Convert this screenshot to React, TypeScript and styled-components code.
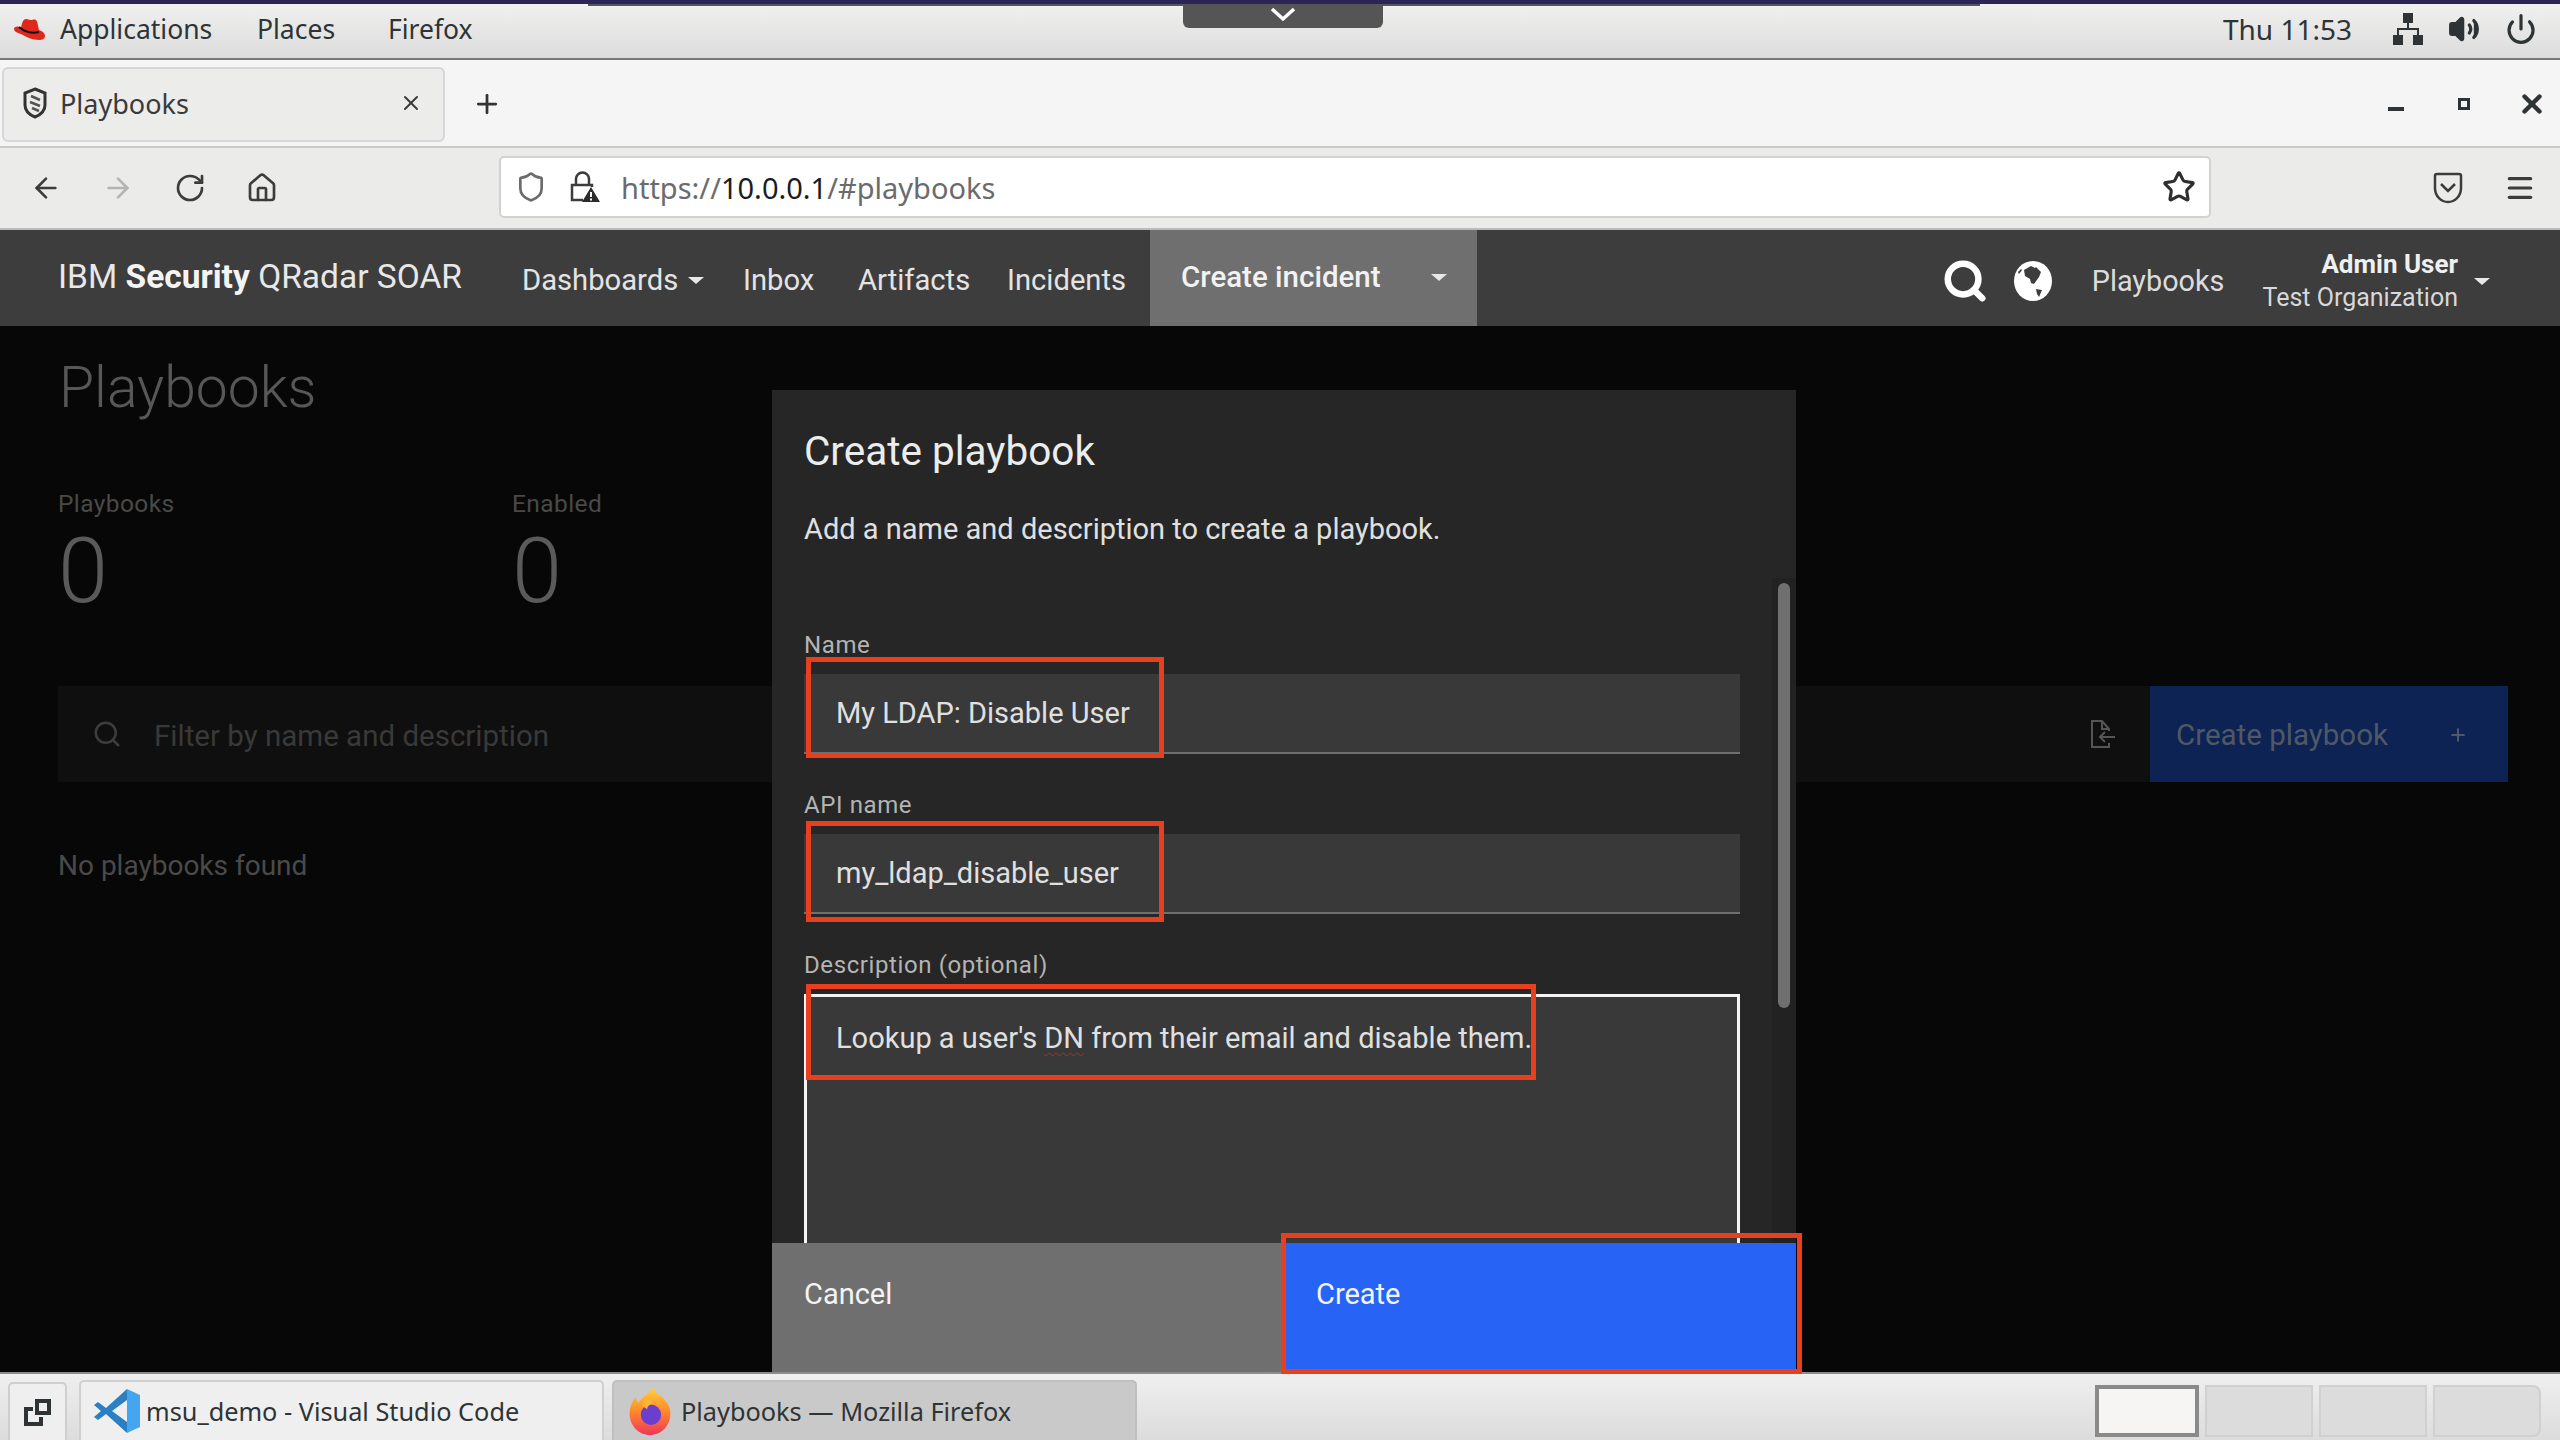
import React from 'react';
import styled, {createGlobalStyle} from 'styled-components';
import {ArrowLeft, ArrowRight, Home, Menu, Plus, Power, RotateCw, Search, Shield, Star, Volume2, X} from 'lucide-react';

const plex = `Roboto, "Noto Sans", sans-serif`;
const gnome = `"Noto Sans", "Open Sans", sans-serif`;

const GlobalStyle = createGlobalStyle`
    html, body {
        margin: 0;
        padding: 0;
        background: #070707;
    }
    * {
        box-sizing: border-box;
    }
`;

const Page = styled.div`
    width: 2560px;
    height: 1440px;
    display: flex;
    flex-direction: column;
    overflow: hidden;
    position: relative;
`;

/* gnome top bar */
const TopBar = styled.div`
    height: 60px;
    flex: none;
    border-top: 4px solid #2b2556;
    border-bottom: 2px solid #77787a;
    background: linear-gradient(#f0f0ef, #dcdcdc);
    display: flex;
    align-items: center;
    padding: 0 23px 4px 14px;
    font: 400 26.5px ${gnome};
    color: #2e3436;
    position: relative;
`;

const MenuLabel = styled.span<{ $w: number }>`
    width: ${p => p.$w}px;
    white-space: nowrap;
`;

const Clock = styled.span`
    margin-left: auto;
    margin-right: 41px;
    font-size: 28px;
    white-space: nowrap;
`;

const TrayIcons = styled.div`
    display: flex;
    align-items: center;
    gap: 25px;
`;

const RemoteBar = styled.div`
    position: absolute;
    top: 0;
    left: 588px;
    width: 1392px;
    height: 2px;
    background: #55555f;
`;

const RemoteTab = styled.div`
    position: absolute;
    top: 0;
    left: 1183px;
    width: 200px;
    height: 24px;
    background: #555;
    border-radius: 0 0 6px 6px;
    display: flex;
    align-items: center;
    justify-content: center;
    padding-bottom: 3px;
`;

/* firefox chrome */
const TabRow = styled.div`
    height: 88px;
    flex: none;
    background: #f5f5f5;
    border-bottom: 2px solid #c9c9c9;
    display: flex;
    align-items: center;
    padding: 2px 13px 0 2px;
`;

const Tab = styled.div`
    width: 443px;
    height: 75px;
    background: #ececea;
    border: 2px solid #d6d6da;
    border-radius: 6px;
    display: flex;
    align-items: center;
    padding: 0 20px 2px 18px;
    font: 400 27px ${gnome};
    color: #3a3a3c;
    gap: 12px;
`;

const TabTitle = styled.span`
    flex: 1;
`;

const NewTab = styled.div`
    margin-left: 27px;
    color: #333;
    display: flex;
`;

const WindowControls = styled.div`
    margin-left: auto;
    display: flex;
    align-items: center;
    gap: 54px;
    color: #2e3436;
`;

const MinimizeGlyph = styled.div`
    width: 16px;
    height: 4px;
    background: #2e3436;
    margin-top: 10px;
`;

const MaximizeGlyph = styled.div`
    width: 12px;
    height: 12px;
    border: 3px solid #2e3436;
`;

const CloseGlyph = styled(X)`
    margin-left: -7px;
`;

const Toolbar = styled.div`
    height: 82px;
    flex: none;
    background: #ebebe9;
    border-bottom: 2px solid #bbbbbb;
    display: flex;
    align-items: center;
    padding: 0 24px 0 30px;
    color: #3c3c3e;
`;

const NavIcons = styled.div`
    display: flex;
    align-items: center;
    gap: 40px;
    width: 469px;
`;

const UrlBar = styled.div`
    width: 1712px;
    height: 62px;
    margin-top: -2px;
    background: #fff;
    border: 2px solid #d2d2d2;
    border-radius: 5px;
    display: flex;
    align-items: center;
    padding: 0 13px 0 14px;
    font: 400 29px ${gnome};
    color: #6b6b6d;
    gap: 22px;
`;

const UrlText = styled.span`
    flex: 1;
    margin-left: -2px;
    b {
        font-weight: 400;
        color: #1c1c1e;
    }
`;

const ToolbarEnd = styled.div`
    margin-left: auto;
    display: flex;
    align-items: center;
    gap: 41px;
`;

/* app header */
const AppNav = styled.div`
    height: 96px;
    flex: none;
    background: #3d3d3d;
    display: flex;
    align-items: stretch;
    padding: 0 70px 0 58px;
    color: #e4e4e4;
    font: 400 29.5px ${plex};
`;

const Brand = styled.div`
    width: 464px;
    display: flex;
    align-items: center;
    font-size: 33.5px;
    padding-bottom: 4px;
    color: #e8e8e8;
    white-space: pre;
    b {
        font-weight: 700;
        color: #f4f4f4;
    }
`;

const NavLink = styled.div<{ $w: number }>`
    width: ${p => p.$w}px;
    display: flex;
    align-items: center;
    gap: 10px;
    padding-top: 4px;
    font-size: 29.2px;
    white-space: nowrap;
`;

const Caret = styled.span`
    width: 0;
    height: 0;
    border-left: 8px solid transparent;
    border-right: 8px solid transparent;
    border-top: 7px solid #e8e8e8;
`;

const CreateIncident = styled.div`
    width: 327px;
    background: #6f6f6f;
    display: flex;
    align-items: center;
    justify-content: space-between;
    padding: 0 30px 2px 31px;
    font-weight: 500;
    color: #f2f2f2;
`;

const NavRight = styled.div`
    margin-left: auto;
    padding-top: 6px;
    display: flex;
    align-items: center;
`;

const SearchGlyph = styled(Search)`
    margin-right: 26px;
`;

const NavPlaybooks = styled.span`
    margin: 0 38px 0 40px;
    font-size: 28.8px;
    color: #dcdcdc;
`;

const UserBlock = styled.div`
    display: flex;
    flex-direction: column;
    align-items: flex-end;
    line-height: 33px;
    margin-right: 16px;
`;

const UserName = styled.span`
    font-weight: 700;
    font-size: 26px;
    color: #f0f0f0;
`;

const UserOrg = styled.span`
    font-size: 25px;
    color: #d8d8d8;
`;

/* dimmed page under the modal */
const Content = styled.div`
    flex: 1;
    background: #070707;
    position: relative;
    z-index: 2;
    padding: 0 52px 0 58px;
    font-family: ${plex};
`;

const PageTitle = styled.h1`
    margin: 31px 0 0 1px;
    font: 300 57px/62px ${plex};
    color: #575757;
`;

const Stats = styled.div`
    display: flex;
    margin-top: 69px;
`;

const Stat = styled.div`
    width: 454px;
`;

const StatLabel = styled.div`
    font: 400 24.5px/32px ${plex};
    letter-spacing: 0.4px;
    color: #494949;
`;

const StatValue = styled.div`
    font: 300 90px/84px ${plex};
    color: #5a5a5a;
    margin: 10px 0 0 0;
`;

const FilterBar = styled.div`
    height: 96px;
    margin-top: 72px;
    background: #0f0f0f;
    display: flex;
    align-items: center;
    padding-left: 34px;
    color: #3d3d3d;
`;

const Placeholder = styled.span`
    margin-left: 32px;
    padding-top: 3px;
    font-size: 29.5px;
    color: #393939;
`;

const ImportIcon = styled.div`
    margin-left: auto;
    margin-right: 34px;
    color: #555;
    display: flex;
`;

const CreatePlaybook = styled.div`
    width: 358px;
    height: 96px;
    background: #0c2354;
    display: flex;
    align-items: center;
    justify-content: space-between;
    padding: 2px 40px 0 26px;
    color: #515865;
    font-size: 29.5px;
`;

const EmptyText = styled.div`
    margin-top: 64px;
    font: 400 28px/40px ${plex};
    color: #4a4a4a;
`;

/* modal */
const Modal = styled.div`
    position: absolute;
    left: 772px;
    top: 64px;
    bottom: 0;
    width: 1024px;
    background: #262626;
    display: flex;
    flex-direction: column;
    color: #e0e0e0;
`;

const ModalHead = styled.div`
    height: 188px;
    flex: none;
    padding: 36px 32px 0;
`;

const ModalTitle = styled.h2`
    margin: 0;
    font: 400 40.5px/50px ${plex};
    color: #ececec;
`;

const ModalSub = styled.p`
    margin: 35px 0 0;
    font: 400 29px/36px ${plex};
    color: #e0e0e0;
    white-space: nowrap;
`;

const ModalBody = styled.div`
    flex: 1;
    min-height: 0;
    overflow: hidden;
    position: relative;
    padding: 52px 56px 0 32px;
`;

const ScrollTrack = styled.div`
    position: absolute;
    top: 0;
    right: 0;
    bottom: 0;
    width: 24px;
    background: #222;
`;

const ScrollThumb = styled.div`
    position: absolute;
    top: 5px;
    left: 6px;
    width: 12px;
    height: 425px;
    border-radius: 6px;
    background: #6f6f6f;
`;

const Field = styled.div`
    margin-bottom: 36px;
`;

const FieldLabel = styled.div`
    font: 400 24px/30px ${plex};
    letter-spacing: 0.6px;
    color: #b4b4b4;
    margin-bottom: 14px;
`;

const TextInput = styled.div`
    height: 80px;
    background: #393939;
    border-bottom: 2px solid #6f6f6f;
    display: flex;
    align-items: center;
    padding-left: 32px;
    font: 400 29px ${plex};
    color: #e0e0e0;
`;

const TextArea = styled.div`
    height: 320px;
    background: #393939;
    border: 3px solid #f4f4f4;
    padding: 21px 29px;
    font: 400 29px/40px ${plex};
    color: #e0e0e0;
    white-space: nowrap;
`;

const SpellError = styled.span`
    text-decoration: underline wavy #a8322a 1px;
    text-underline-offset: 4px;
`;

const ModalFooter = styled.div`
    height: 129px;
    flex: none;
    display: grid;
    grid-template-columns: 511px 1fr;
`;

const FooterButton = styled.div<{ $primary?: boolean }>`
    background: ${p => (p.$primary ? '#2764f6' : '#6f6f6f')};
    padding: 33px 0 0 ${p => (p.$primary ? '33px' : '32px')};
    font: 400 29px/36px ${plex};
    color: #f4f4f4;
`;

const Callout = styled.div<{ $x: number; $y: number; $w: number; $h: number }>`
    position: absolute;
    left: ${p => p.$x}px;
    top: ${p => p.$y}px;
    width: ${p => p.$w}px;
    height: ${p => p.$h}px;
    border: 5px solid #e8401f;
    pointer-events: none;
`;

/* bottom panel */
const Taskbar = styled.div`
    height: 68px;
    flex: none;
    border-top: 2px solid #8c8c8c;
    background: linear-gradient(#efefef, #dcdcdc);
    display: flex;
    align-items: flex-end;
    padding: 0 19px 0 8px;
    font: 400 25.3px ${gnome};
    color: #2e3436;
`;

const ShowDesktop = styled.div`
    width: 59px;
    height: 58px;
    background: #efefef;
    border: 2px solid #cfcfcf;
    border-bottom: none;
    border-radius: 5px 5px 0 0;
    display: flex;
    align-items: center;
    justify-content: center;
    margin-right: 12px;
`;

const WindowButton = styled.div<{ $active?: boolean }>`
    width: 525px;
    height: 60px;
    margin-right: 8px;
    background: ${p => (p.$active ? '#c9c9c9' : '#efefef')};
    border: 2px solid ${p => (p.$active ? '#bfbfbf' : '#d0d0d0')};
    border-bottom: none;
    border-radius: 5px 5px 0 0;
    display: flex;
    align-items: center;
    padding-left: 14px;
    gap: 9px;
    white-space: nowrap;
`;

const Pager = styled.div`
    margin-left: auto;
    margin-bottom: 3px;
    display: flex;
    gap: 6px;
    align-self: flex-end;
`;

const PagerCell = styled.div<{ $active?: boolean }>`
    width: ${p => (p.$active ? '104px' : '108px')};
    height: 52px;
    background: ${p => (p.$active ? '#f6f5f3' : '#dcdcdc')};
    border: ${p => (p.$active ? '4px solid #8a8a8a' : '2px solid #d0d0d0')};
    &:last-child {
        border-top-right-radius: 8px;
        border-bottom-right-radius: 8px;
    }
`;

const HatSvg = styled.svg`
    margin-right: 15px;
    margin-top: 2px;
`;

const VsCodeSvg = styled.svg`
    margin: 0 -3px 0 -1px;
`;

const RedHat = () => (
    <HatSvg width="31" height="24" viewBox="0 0 31 24">
        <path fill="#e0271c" d="M7 10C8 5 9 1 12 1c2 0 3 1 5 1s3-1 5 0c2 2 2 7 3 10 3 1 6 3 6 6s-3 4-6 4c-6 0-13-3-18-6-4-1-7-3-7-5s3-3 5-2z"/>
        <path fill="none" stroke="#1a1010" strokeWidth="2" d="M5 9c4 4 12 7 20 5"/>
    </HatSvg>
);

const NetworkIcon = () => (
    <svg width="30" height="32" viewBox="0 0 30 32" fill="#2e3436">
        <rect x="10" y="0" width="10" height="10"/>
        <rect x="0" y="22" width="10" height="10"/>
        <rect x="20" y="22" width="10" height="10"/>
        <path d="M14 10h2v5h10v7h-2v-5H6v5H4v-7h10z"/>
    </svg>
);

const PlaybookShield = () => (
    <svg width="26" height="32" viewBox="0 0 26 32">
        <path d="M13 2l10 4v12c0 6-5 10-10 12C8 28 3 24 3 18V6z" fill="none" stroke="#333" strokeWidth="3"/>
        <path d="M9 9l9 4M8 15l10 4M10 21l7 3" stroke="#555" strokeWidth="2.5"/>
    </svg>
);

const LockWarning = () => (
    <svg width="32" height="34" viewBox="0 0 32 34" fill="none" stroke="#3c3c3e" strokeWidth="2.5">
        <path d="M7 15V9a6.500 6.500 0 0113 0v6"/>
        <path d="M14 30H3V15h20v2"/>
        <path d="M22 17l9 15H13z" fill="#2c2c2e" stroke="none"/>
        <path d="M22 22v5M22 28.500v2" stroke="#fff" strokeWidth="2"/>
    </svg>
);

const PocketIcon = () => (
    <svg width="30" height="34" viewBox="0 0 30 34" fill="none" stroke="#3c3c3e" strokeWidth="2.5">
        <path d="M4 3h22a2 2 0 012 2v12c0 8-6 14-13 14S2 25 2 17V5a2 2 0 012-2z"/>
        <path d="M8 13l7 7 7-7"/>
    </svg>
);

const GlobeIcon = () => (
    <svg width="38" height="40" viewBox="0 0 38 40">
        <ellipse cx="19" cy="20" rx="19" ry="20" fill="#fff"/>
        <path fill="#3d3d3d" d="M10 9l7-4 4 2 1-1 5 5-2 5-5 7-3-1-1-4-5-3z"/>
        <path fill="#3d3d3d" d="M22 28l6 1-3 7-2-3z"/>
        <path fill="#3d3d3d" d="M4 11l3-3 1 1-3 4z"/>
    </svg>
);

const ImportFile = () => (
    <svg width="26" height="30" viewBox="0 0 26 30" fill="none" stroke="currentColor" strokeWidth="2">
        <path d="M19 24v4H2V2h10l7 8v2"/>
        <path d="M12 2v8h7"/>
        <path d="M25 18H10M15 13l-5 5 5 5"/>
    </svg>
);

const RestoreIcon = () => (
    <svg width="30" height="30" viewBox="0 0 30 30" fill="none" stroke="#2e3436" strokeWidth="4">
        <rect x="14" y="4" width="12" height="12"/>
        <path d="M10 12H3v15h15v-7"/>
    </svg>
);

const VsCodeIcon = () => (
    <VsCodeSvg width="46" height="44" viewBox="0 0 46 44">
        <path fill="#2b7fc3" d="M33 0L12 19l-8-6-4 3 7 6-7 6 4 3 8-6 21 19V33L18 22l15-11z"/>
        <path fill="#43a6ee" d="M33 0l13 6v32l-13 6z"/>
    </VsCodeSvg>
);

const FirefoxIcon = () => (
    <svg width="44" height="50" viewBox="0 0 44 54">
        <defs>
            <linearGradient id="fx" x1="0" y1="0" x2="0" y2="1">
                <stop offset="0" stopColor="#ffd23f"/>
                <stop offset="0.5" stopColor="#ff8a2b"/>
                <stop offset="1" stopColor="#f0345a"/>
            </linearGradient>
        </defs>
        <path fill="url(#fx)" d="M26 1c1 5 4 8 8 10 6 5 10 11 10 19 0 13-10 23-22 23S0 43 0 30c0-7 3-14 7-18 0 3 1 5 3 6 3-6 11-10 16-17z"/>
        <circle cx="23" cy="31" r="11" fill="#6a3fd0"/>
        <path fill="#ffb52e" d="M17 14c4 0 7 2 8 5-3 1-6 3-6 6l-5-3c0-3 1-6 3-8z"/>
    </svg>
);

const App = () => {
    return (
        <>
            <GlobalStyle/>
            <Page>
                <TopBar>
                    <RedHat/>
                    <MenuLabel $w={197}>Applications</MenuLabel>
                    <MenuLabel $w={131}>Places</MenuLabel>
                    <MenuLabel $w={90}>Firefox</MenuLabel>
                    <RemoteBar/>
                    <RemoteTab>
                        <svg width="26" height="15" viewBox="0 0 26 15" fill="none" stroke="#fff" strokeWidth="3.5">
                            <path d="M2 2l11 10L24 2"/>
                        </svg>
                    </RemoteTab>
                    <Clock>Thu 11:53</Clock>
                    <TrayIcons>
                        <NetworkIcon/>
                        <Volume2 size={32} fill="#2e3436" strokeWidth={2.4}/>
                        <Power size={32} strokeWidth={2.4}/>
                    </TrayIcons>
                </TopBar>
                <TabRow>
                    <Tab>
                        <PlaybookShield/>
                        <TabTitle>Playbooks</TabTitle>
                        <X size={24} strokeWidth={2}/>
                    </Tab>
                    <NewTab><Plus size={30} strokeWidth={2.2}/></NewTab>
                    <WindowControls>
                        <MinimizeGlyph/>
                        <MaximizeGlyph/>
                        <CloseGlyph size={30} strokeWidth={3.5}/>
                    </WindowControls>
                </TabRow>
                <Toolbar>
                    <NavIcons>
                        <ArrowLeft size={32} strokeWidth={2}/>
                        <ArrowRight size={32} strokeWidth={2} color="#b4b4b4"/>
                        <RotateCw size={32} strokeWidth={2}/>
                        <Home size={32} strokeWidth={2}/>
                    </NavIcons>
                    <UrlBar>
                        <Shield size={32} strokeWidth={2}/>
                        <LockWarning/>
                        <UrlText>https://<b>10.0.0.1</b>/#playbooks</UrlText>
                        <Star size={34} strokeWidth={2.2} color="#2e2e30"/>
                    </UrlBar>
                    <ToolbarEnd>
                        <PocketIcon/>
                        <Menu size={32} strokeWidth={2.4}/>
                    </ToolbarEnd>
                </Toolbar>
                <AppNav>
                    <Brand>IBM <b>Security</b> QRadar SOAR</Brand>
                    <NavLink $w={221}>Dashboards <Caret/></NavLink>
                    <NavLink $w={115}>Inbox</NavLink>
                    <NavLink $w={149}>Artifacts</NavLink>
                    <NavLink $w={143}>Incidents</NavLink>
                    <CreateIncident>Create incident <Caret/></CreateIncident>
                    <NavRight>
                        <SearchGlyph size={46} strokeWidth={3.4} color="#fff"/>
                        <GlobeIcon/>
                        <NavPlaybooks>Playbooks</NavPlaybooks>
                        <UserBlock>
                            <UserName>Admin User</UserName>
                            <UserOrg>Test Organization</UserOrg>
                        </UserBlock>
                        <Caret/>
                    </NavRight>
                </AppNav>
                <Content>
                    <PageTitle>Playbooks</PageTitle>
                    <Stats>
                        <Stat>
                            <StatLabel>Playbooks</StatLabel>
                            <StatValue>0</StatValue>
                        </Stat>
                        <Stat>
                            <StatLabel>Enabled</StatLabel>
                            <StatValue>0</StatValue>
                        </Stat>
                    </Stats>
                    <FilterBar>
                        <Search size={30} strokeWidth={2}/>
                        <Placeholder>Filter by name and description</Placeholder>
                        <ImportIcon><ImportFile/></ImportIcon>
                        <CreatePlaybook>Create playbook <Plus size={20} strokeWidth={2.5}/></CreatePlaybook>
                    </FilterBar>
                    <EmptyText>No playbooks found</EmptyText>

                    <Modal>
                        <ModalHead>
                            <ModalTitle>Create playbook</ModalTitle>
                            <ModalSub>Add a name and description to create a playbook.</ModalSub>
                        </ModalHead>
                        <ModalBody>
                            <Field>
                                <FieldLabel>Name</FieldLabel>
                                <TextInput>My LDAP: Disable User</TextInput>
                            </Field>
                            <Field>
                                <FieldLabel>API name</FieldLabel>
                                <TextInput>my_ldap_disable_user</TextInput>
                            </Field>
                            <Field>
                                <FieldLabel>Description (optional)</FieldLabel>
                                <TextArea>Lookup a user's <SpellError>DN</SpellError> from their email and disable them.</TextArea>
                            </Field>
                            <ScrollTrack><ScrollThumb/></ScrollTrack>
                        </ModalBody>
                        <ModalFooter>
                            <FooterButton>Cancel</FooterButton>
                            <FooterButton $primary>Create</FooterButton>
                        </ModalFooter>
                    </Modal>

                    <Callout $x={806} $y={331} $w={358} $h={101}/>
                    <Callout $x={806} $y={495} $w={358} $h={101}/>
                    <Callout $x={806} $y={658} $w={730} $h={96}/>
                    <Callout $x={1281} $y={907} $w={521} $h={141}/>
                </Content>
                <Taskbar>
                    <ShowDesktop><RestoreIcon/></ShowDesktop>
                    <WindowButton><VsCodeIcon/>msu_demo - Visual Studio Code</WindowButton>
                    <WindowButton $active><FirefoxIcon/>Playbooks — Mozilla Firefox</WindowButton>
                    <Pager>
                        <PagerCell $active/>
                        <PagerCell/>
                        <PagerCell/>
                        <PagerCell/>
                    </Pager>
                </Taskbar>
            </Page>
        </>
    );
};

export default App;
